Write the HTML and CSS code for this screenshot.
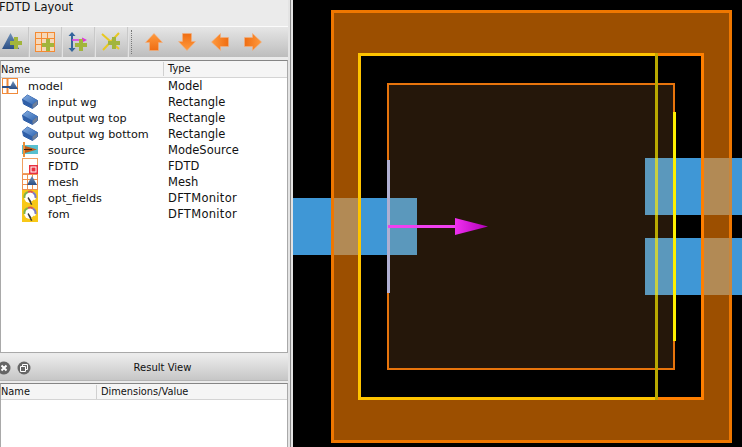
FILE: index.html
```html
<!DOCTYPE html>
<html lang="en">
<head>
<meta charset="utf-8">
<title>FDTD Layout</title>
<link rel="stylesheet" href="styles.css">
</head>
<body>
<svg class="defs" aria-hidden="true">
  <defs>
    <linearGradient id="gOrange" x1="0" y1="0" x2="0" y2="1"><stop offset="0" stop-color="#ff9a3e"/><stop offset="1" stop-color="#ef6d12"/></linearGradient>
    <linearGradient id="gBlock" x1="0" y1="0" x2="1" y2="1"><stop offset="0" stop-color="#86addf"/><stop offset="1" stop-color="#2f66b4"/></linearGradient>
    <linearGradient id="gTri" x1="0" y1="0" x2="0" y2="1"><stop offset="0" stop-color="#6f90b8"/><stop offset="1" stop-color="#2c4f86"/></linearGradient>
    <linearGradient id="gHead" x1="0" y1="0" x2="1" y2="0"><stop offset="0" stop-color="#f030f0"/><stop offset="1" stop-color="#b000b8"/></linearGradient>
    <symbol id="plus" viewBox="0 0 12 12"><path d="M4 0h4v4h4v4H8v4H4V8H0V4h4z" fill="#a2b53c"/></symbol>
    <symbol id="block" viewBox="0 0 16 16"><path d="M.5 5 5.500 1 15.500 6.500 15.500 10.500 10.500 14.500 1.500 10z" fill="#2f5fa8" stroke="#2f5fa8" stroke-linejoin="round"/><path d="M.5 5 5.500 1 15.500 6.500 10.500 10.500z" fill="url(#gBlock)"/><path d="M10.500 10.500 15.500 6.500V10.500L10.500 14.500z" fill="#707f98"/></symbol>
    <symbol id="gauge" viewBox="0 0 16 16"><rect width="16" height="16" fill="#f8c818"/><circle cx="8" cy="7" r="6" fill="#fff"/><path d="M2.500 8A5.500 5.500 0 0 1 6 2" fill="none" stroke="#7fb24a" stroke-width="2"/><path d="M6 2A5.500 5.500 0 0 1 11 2.500" fill="none" stroke="#d8584a" stroke-width="2"/><path d="M11 2.500A5.500 5.500 0 0 1 13.500 8" fill="none" stroke="#7a7ac8" stroke-width="2"/><path d="M6.500 7 11 14 9 15 5.500 8z" fill="#3a3a3a"/><path d="M12 9.500 16 13V16H11.500L9 12z" fill="#f8c818"/></symbol>
    <symbol id="arrowUp" viewBox="0 0 18 18"><path d="M9 .5 17.500 9.500H13.500V17.500H4.500V9.500H.5z" fill="url(#gOrange)" stroke="#f4b080" stroke-width=".6"/></symbol>
  </defs>
</svg>
<div class="app">
  <aside class="side">
    <div class="title">FDTD Layout</div>
    <div class="toolbar">
      <span class="tool first">
        <svg class="ti" viewBox="0 0 20 20"><path d="M8.500 1 0 17H17z" fill="url(#gTri)"/><use href="#plus" x="8" y="5" width="12" height="12"/></svg>
      </span>
      <span class="tool">
        <svg class="ti" viewBox="0 0 20 20"><rect x=".5" y=".5" width="19" height="19" fill="#f6d7b8" stroke="#f48a32"/><path d="M.5 6.500H19.500M.5 12.500H19.500M6.500 .5V19.500M12.500 .5V19.500" stroke="#f48a32"/><use href="#plus" x="7" y="7" width="12" height="12"/></svg>
      </span>
      <span class="tool">
        <svg class="ti" viewBox="0 0 20 20"><path d="M4 3V17" stroke="#35659c" stroke-width="2"/><path d="M4 0 7.500 4H.5zM4 20 .5 16H7.500z" fill="#35659c"/><path d="M4 8H15" stroke="#e030e0" stroke-width="1.500"/><path d="M19 8 14 5.500V10.500z" fill="#e030e0"/><use href="#plus" x="7" y="7" width="12" height="12"/></svg>
      </span>
      <span class="tool">
        <svg class="ti" viewBox="0 0 20 20"><path d="M1 2 18 17M18 1 2 18" stroke="#e8c820" stroke-width="2"/><use href="#plus" x="7" y="5" width="12" height="12"/></svg>
      </span>
      <span class="dots"></span>
      <span class="arrow"><svg class="ai"><use href="#arrowUp"/></svg></span>
      <span class="arrow"><svg class="ai down"><use href="#arrowUp"/></svg></span>
      <span class="arrow"><svg class="ai left"><use href="#arrowUp"/></svg></span>
      <span class="arrow"><svg class="ai right"><use href="#arrowUp"/></svg></span>
    </div>
    <div class="panel tree">
      <div class="head"><span class="c1">Name</span><span class="c2">Type</span></div>
      <div class="row root"><span class="c1">
        <svg class="ic" viewBox="0 0 16 16"><rect x=".5" y=".5" width="15" height="15" fill="#fff" stroke="#f08a3a"/><path d="M5.500 0V16" stroke="#f08a3a" stroke-width="2"/><path d="M0 9H9" stroke="#2c4f86" stroke-width="2"/><path d="M11 3 16 11H7z" fill="url(#gTri)"/></svg>model</span><span class="c2">Model</span></div>
      <div class="row"><span class="c1"><svg class="ic"><use href="#block"/></svg>input wg</span><span class="c2">Rectangle</span></div>
      <div class="row"><span class="c1"><svg class="ic"><use href="#block"/></svg>output wg top</span><span class="c2">Rectangle</span></div>
      <div class="row"><span class="c1"><svg class="ic"><use href="#block"/></svg>output wg bottom</span><span class="c2">Rectangle</span></div>
      <div class="row"><span class="c1"><svg class="ic" viewBox="0 0 16 16"><rect y="3" width="16" height="9" fill="#58c0d0"/><path d="M1 0H3V15H1z" fill="#e8903a"/><path d="M3 4 15 7.500 3 11z" fill="#c05a18"/><path d="M2 7H10V8H2z" fill="#402010"/></svg>source</span><span class="c2">ModeSource</span></div>
      <div class="row"><span class="c1"><svg class="ic" viewBox="0 0 16 16"><rect x=".5" y=".5" width="15" height="15" fill="#fff" stroke="#f0a060"/><rect x="7" y="7" width="9" height="9" fill="#e83040"/><rect x="9" y="9" width="5" height="5" fill="none" stroke="#fff"/></svg>FDTD</span><span class="c2">FDTD</span></div>
      <div class="row"><span class="c1"><svg class="ic" viewBox="0 0 16 16"><rect x=".5" y=".5" width="15" height="15" fill="#fff" stroke="#f09050"/><path d="M0 5.500H16M0 10.500H16M5.500 0V16M10.500 0V16" stroke="#f09050"/><path d="M10 2 15 11H5z" fill="url(#gTri)"/></svg>mesh</span><span class="c2">Mesh</span></div>
      <div class="row"><span class="c1"><svg class="ic"><use href="#gauge"/></svg>opt_fields</span><span class="c2 wide">DFTMonitor</span></div>
      <div class="row"><span class="c1"><svg class="ic"><use href="#gauge"/></svg>fom</span><span class="c2 wide">DFTMonitor</span></div>
    </div>
    <div class="dockbar">
      <span class="round"><svg viewBox="0 0 14 14"><circle cx="7" cy="7" r="6.500" fill="#666"/><path d="M4.500 4.500 9.500 9.500M9.500 4.500 4.500 9.500" stroke="#fff" stroke-width="2"/></svg></span>
      <span class="round"><svg viewBox="0 0 14 14"><circle cx="7" cy="7" r="6.500" fill="#666"/><path d="M3.500 5.500H8.500V10.500H3.500zM5.500 5.500V3.500H10.500V8.500H8.500" fill="none" stroke="#fff"/></svg></span>
      <span class="docktitle">Result View</span>
    </div>
    <div class="panel result">
      <div class="head small"><span class="r1">Name</span><span class="r2">Dimensions/Value</span></div>
    </div>
  </aside>
  <div class="divider"></div>
  <main class="view">
    <svg class="scene" viewBox="0 0 449 447" shape-rendering="crispEdges" role="img" aria-label="FDTD layout view">
      <!-- simulation-region outer band -->
      <rect x="38" y="10" width="401" height="433" fill="#ef7700"/>
      <rect x="41" y="13" width="395" height="427" fill="#9c4f00"/>
      <rect x="65" y="53" width="346" height="347" fill="#ff7f00"/>
      <rect x="68" y="56" width="340" height="341" fill="#000"/>
      <!-- FDTD region -->
      <rect x="94" y="83" width="288" height="287" fill="#e8740c"/>
      <rect x="96" y="85" width="284" height="283" fill="#25170a"/>
      <!-- waveguides -->
      <rect x="0" y="198" width="124" height="57" fill="#3f97d6"/>
      <rect x="96" y="198" width="28" height="57" fill="#5b98bc"/>
      <rect x="41" y="198" width="24" height="57" fill="#b28a55"/>
      <rect x="38" y="198" width="3" height="57" fill="#ef7700"/>
      <rect x="352" y="158" width="97" height="57" fill="#3f97d6"/>
      <rect x="352" y="238" width="97" height="57" fill="#3f97d6"/>
      <rect x="352" y="158" width="28" height="57" fill="#5b98bc"/>
      <rect x="352" y="238" width="28" height="57" fill="#5b98bc"/>
      <rect x="411" y="158" width="25" height="57" fill="#b28a55"/>
      <rect x="411" y="238" width="25" height="57" fill="#b28a55"/>
      <rect x="408" y="158" width="3" height="57" fill="#ff7f00"/>
      <rect x="408" y="238" width="3" height="57" fill="#ff7f00"/>
      <rect x="436" y="158" width="3" height="57" fill="#c8863c"/>
      <rect x="436" y="238" width="3" height="57" fill="#c8863c"/>
      <!-- monitor -->
      <rect x="65" y="53" width="299" height="3" fill="#ffc400"/>
      <rect x="65" y="397" width="299" height="3" fill="#ffc400"/>
      <rect x="65" y="53" width="3" height="347" fill="#ffc400"/>
      <rect x="362" y="53" width="3" height="347" fill="#b8a800"/>
      <rect x="362" y="158" width="3" height="57" fill="#c8d040"/>
      <rect x="362" y="238" width="3" height="57" fill="#c8d040"/>
      <rect x="362" y="53" width="3" height="3" fill="#c8a800"/>
      <!-- source and right-hand edge -->
      <rect x="94" y="160" width="3" height="133" fill="#b0b0d2"/>
      <rect x="380" y="112" width="3" height="229" fill="#fff000"/>
      <!-- injection arrow -->
      <rect x="95" y="225" width="68" height="3" fill="#f040f0"/>
      <path d="M162 218 195 226.500 162 235z" fill="url(#gHead)" shape-rendering="auto"/>
    </svg>
  </main>
</div>
</body>
</html>
```
FILE: styles.css
```css
* { box-sizing: border-box; }
html, body { margin: 0; height: 100%; overflow: hidden; }
body { font-family: "DejaVu Sans", sans-serif; font-size: 11.5px; color: #111; background: #ebebeb; }
.defs { position: absolute; width: 0; height: 0; }
.app { display: flex; width: 742px; height: 447px; }
.side { width: 288px; flex: none; display: flex; flex-direction: column; background: #ebebeb; }
.title { height: 26px; line-height: 14px; margin-left: -1px; font-size: 11.5px; white-space: nowrap; }
.toolbar { height: 31px; flex: none; display: flex; align-items: center; border-top: 1px solid #fbfbfb; background: linear-gradient(#e6e6e6, #bdbdbd); }
.tool { width: 33px; height: 100%; flex: none; display: flex; align-items: center; justify-content: center; border-right: 1px solid #c9c9c9; box-shadow: 1px 0 0 #e2e2e2; }
.tool.first { width: 29px; padding-right: 4px; }
.ti { width: 20px; height: 20px; display: block; }
.dots { width: 1px; height: 24px; margin: 0 5px 0 3px; flex: none; border-left: 1px dotted #777; }
.arrow { width: 33px; flex: none; display: flex; justify-content: center; }
.ai { width: 18px; height: 18px; display: block; }
.down { transform: rotate(180deg); }
.left { transform: rotate(-90deg); }
.right { transform: rotate(90deg); }
.panel { background: #fff; border: 1px solid #a9a9a9; border-top-color: #858585; }
.tree { height: 293px; margin-top: 3px; flex: none; }
.head { height: 17px; display: flex; align-items: center; background: #f5f5f5; border-bottom: 1px solid #d4d4d4; font-size: 9.8px; }
.c1 { width: 162px; flex: none; display: flex; align-items: center; white-space: nowrap; }
.row .c1 { font-size: 11.2px; }
.c2 { flex: 1; padding-left: 4px; white-space: nowrap; }
.head .c1 { height: 14px; }
.head .c2 { height: 14px; line-height: 14px; border-left: 1px solid #d0d0d0; }
.row { height: 16px; display: flex; align-items: center; }
.row .c1 { padding-left: 20px; }
.row .c2 { padding-left: 5px; }
.row .wide { letter-spacing: .3px; }
.row.root .c1 { padding-left: 0; }
.ic { width: 16px; height: 16px; flex: none; margin: 0 10px 0 1px; display: block; }
.dockbar { height: 26px; margin-top: 2px; flex: none; display: flex; align-items: center; gap: 6px; background: linear-gradient(#ececec, #c6c6c6); border-bottom: 1px solid #b5b5b5; }
.round { width: 14px; height: 14px; flex: none; }
.round:first-child { margin-left: -3px; }
.round svg { display: block; width: 14px; height: 14px; }
.docktitle { flex: 1; text-align: center; font-size: 10px; }
.result { flex: 1; margin-top: 2px; border-bottom: 0; }
.head.small { height: 16px; }
.small .r1 { width: 95px; flex: none; padding-left: 0; }
.small .r2 { flex: 1; height: 14px; line-height: 14px; padding-left: 4px; border-left: 1px solid #d0d0d0; }
.divider { width: 5px; flex: none; background: #8a8a8a; border-left: 2px solid #e4e4e4; border-right: 2px solid #e4e4e4; }
.view { flex: 1; min-width: 0; background: #000; }
.scene { display: block; width: 449px; height: 447px; }
```
